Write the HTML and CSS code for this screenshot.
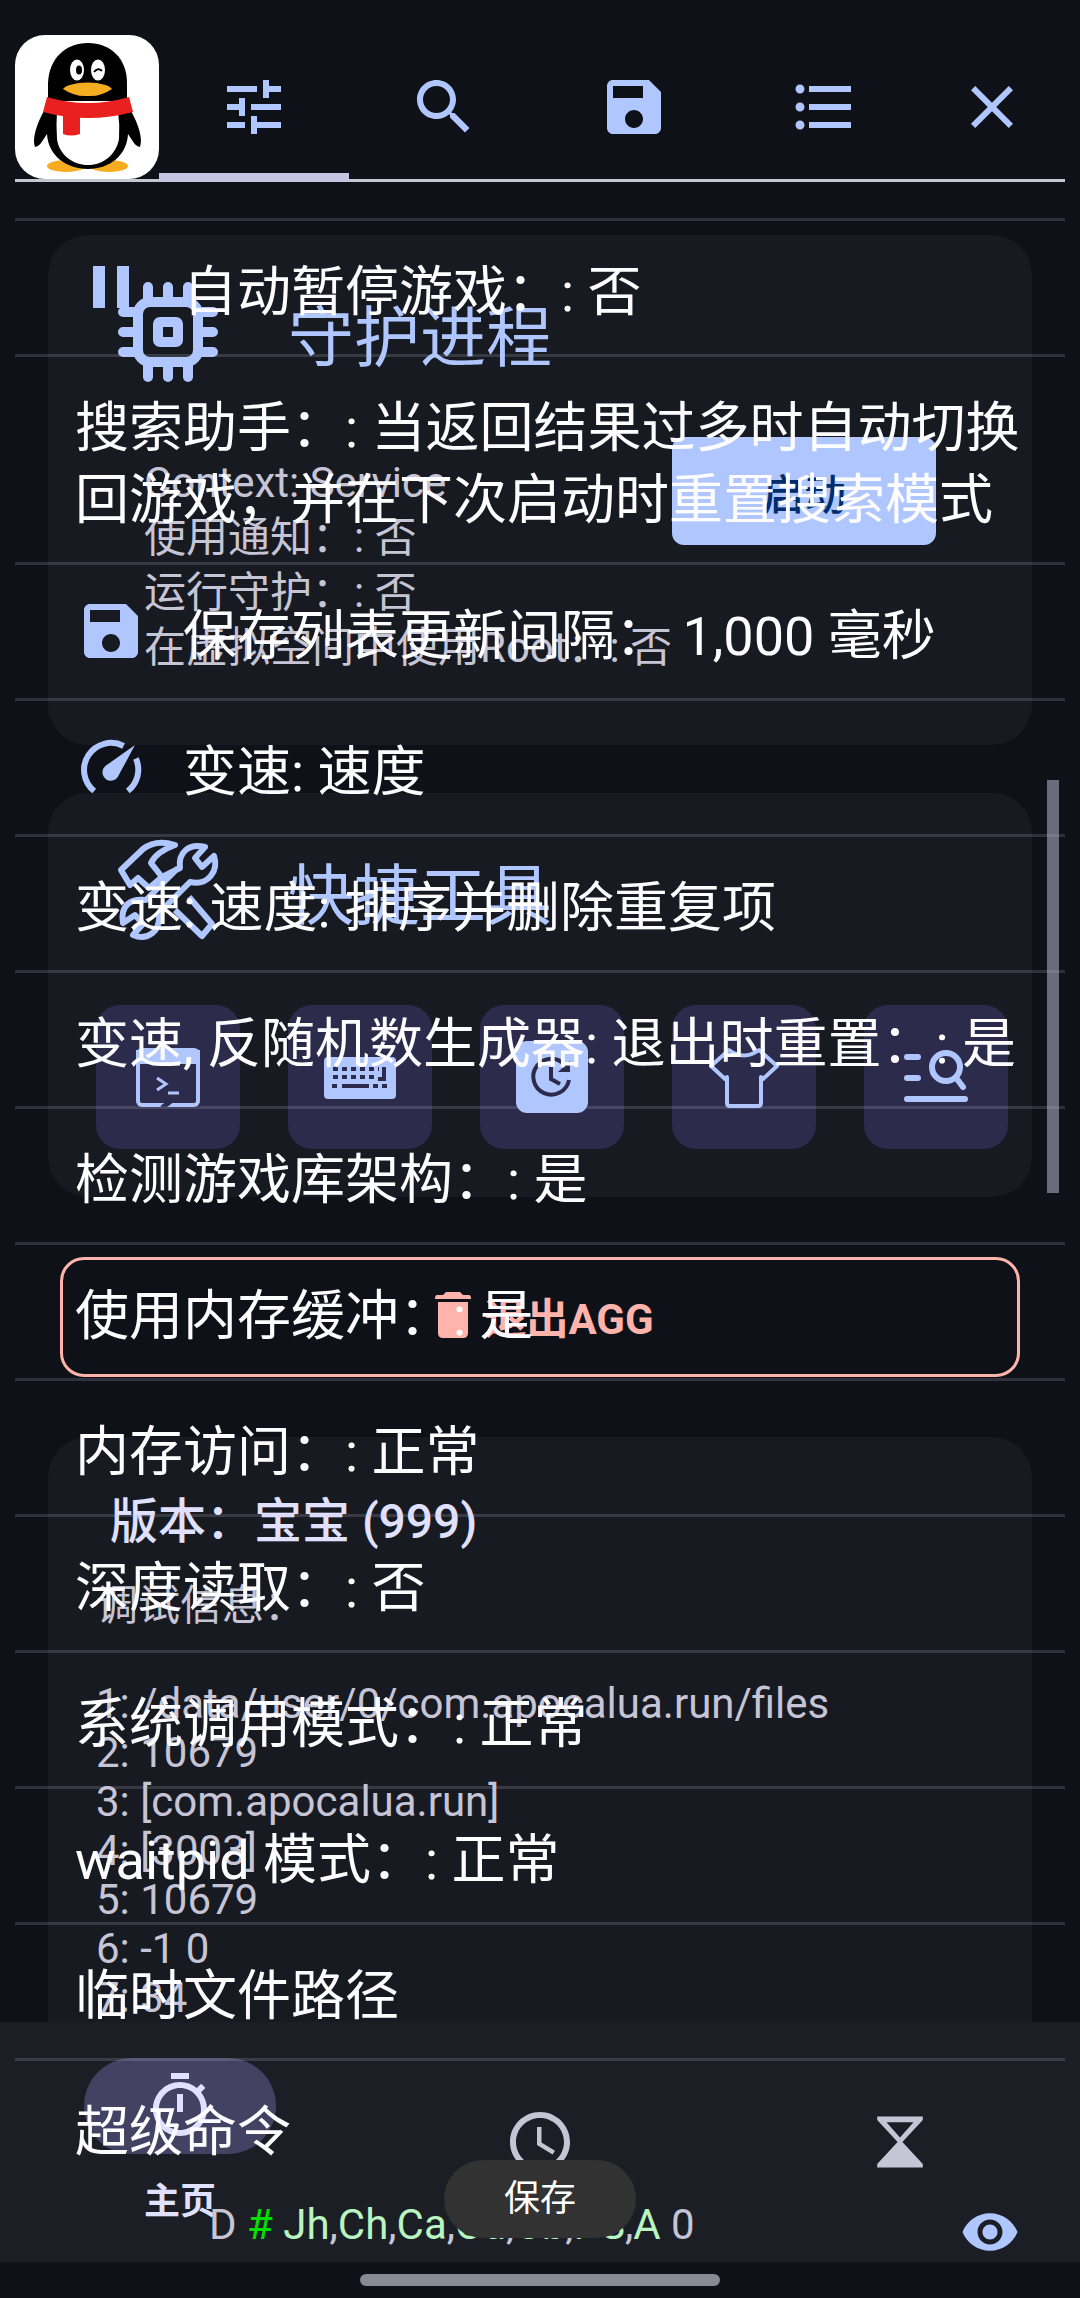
FILE: index.html
```html
<!DOCTYPE html>
<html lang="zh-CN">
<head>
    <meta charset="UTF-8">
    <meta name="viewport" content="width=device-width, initial-scale=1">
    <title>AGG</title>
    <link rel="stylesheet" href="styles.css">
</head>
<body>
<div class="screen">

    <!-- app -->
    <div class="app">
        <main class="content">
            <section class="card">
                <div class="card-head">
                    <svg class="card-icon" viewBox="0 0 120 120" fill="none" stroke="currentColor" stroke-width="10" stroke-linecap="round">
                        <rect x="30" y="30" width="60" height="60" rx="12"/>
                        <rect x="50" y="50" width="20" height="20" rx="2"/>
                        <path d="M40 15v12M60 15v12M80 15v12M40 93v12M60 93v12M80 93v12M15 40h12M15 60h12M15 80h12M93 40h12M93 60h12M93 80h12"/>
                    </svg>
                    <h2>守护进程</h2>
                </div>
                <div class="service">
                    <p>Context: Service<br>使用通知：: 否<br>运行守护：: 否<br>在虚拟空间中使用Root：: 否</p>
                    <button class="start">启动</button>
                </div>
            </section>

            <section class="card tools-card">
                <div class="card-head">
                    <svg class="card-icon" viewBox="-10 -10 120 120" fill="none" stroke="currentColor" stroke-width="6" stroke-linejoin="round">
                        <path d="M3 30L25 9Q38-1 57 5Q38 12 33 23L44 37L31 48L20 38L12 45Z"/>
                        <path d="M46 36L62 28C60 13 70 3 87 7L77 18L84 27L96 16C101 31 90 46 72 42L41 73C43 92 29 101 15 95L25 84L17 75L5 83C2 65 13 58 28 60L60 28"/>
                        <path d="M71 57L94 84L84 96L57 70"/>
                    </svg>
                    <h2>快捷工具</h2>
                </div>
                <div class="tools">
                    <button class="tool" aria-label="终端">
                        <svg viewBox="0 0 72 72" fill="none" stroke="currentColor" stroke-width="4">
                            <rect x="6" y="9" width="60" height="55" rx="4"/>
                            <path d="M6 11h60v10H6z" fill="currentColor"/>
                            <path d="M25 37l9 6-9 6M36 52h11" stroke-width="3"/>
                            <path d="M30 67l10-8" stroke="#2d2b4b" stroke-width="5"/>
                        </svg>
                    </button>
                    <button class="tool" aria-label="键盘">
                        <svg viewBox="0 0 72 72">
                            <rect y="16" width="72" height="42" rx="4" fill="currentColor"/>
                            <path d="M9 28h46M9 36h43M8 45h6M49 45h5M58 45h5" fill="none" stroke="#2d2b4b" stroke-width="4" stroke-dasharray="5 4"/>
                            <path d="M18 45h27M60 26v12h-6" fill="none" stroke="#2d2b4b" stroke-width="4"/>
                        </svg>
                    </button>
                    <button class="tool" aria-label="定时">
                        <svg viewBox="0 0 72 72" fill="none" stroke="#2d2b4b" stroke-width="4">
                            <rect width="72" height="72" rx="11" fill="currentColor" stroke="none"/>
                            <path d="M49 24A18 18 0 1 0 53 39M35 26v12l9 5"/>
                            <path d="M54 20v11H42z" fill="#2d2b4b" stroke="none"/>
                        </svg>
                    </button>
                    <button class="tool" aria-label="主题">
                        <svg viewBox="0 0 72 72" fill="none" stroke="currentColor" stroke-width="4" stroke-linejoin="round">
                            <path d="M21 9Q36 20 51 9L69 25L55 38L53 36V62Q53 65 50 65H22Q19 65 19 62V36L17 38L3 25Z"/>
                        </svg>
                    </button>
                    <button class="tool" aria-label="查找">
                        <svg viewBox="0 0 72 72" fill="none" stroke="currentColor" stroke-width="6" stroke-linecap="round">
                            <path d="M7 16h11M7 37h11M7 58h58M57 38l6 8"/>
                            <circle cx="46" cy="26" r="14"/>
                        </svg>
                    </button>
                </div>
            </section>

            <button class="exit">
                <svg viewBox="0 0 54 54" fill="currentColor">
                    <path d="M20 4h14l3 3h6q2 0 2 4H9q0-4 2-4h6zM12 14h30v31q0 5-5 5H17q-5 0-5-5z"/>
                </svg>
                退出AGG
            </button>

            <section class="card debug-card">
                <h3>版本：宝宝 (999)</h3>
                <pre class="debug">调试信息：

1: /data/user/0/com.apocalua.run/files
2: 10679
3: [com.apocalua.run]
4: [3003]
5: 10679
6: -1 0
7: 34</pre>
            </section>
        </main>

        <nav class="nav">
            <a class="nav-item active" href="#home">
                <span class="pill">
                    <svg class="icon" viewBox="0 0 24 24"><path d="M15 1H9v2h6V1zm-4 13h2V8h-2v6zm8.03-6.61l1.42-1.42c-.43-.51-.9-.99-1.41-1.41l-1.42 1.42C16.07 4.74 14.12 4 12 4c-4.97 0-9 4.03-9 9s4.02 9 9 9 9-4.03 9-9c0-2.12-.74-4.07-1.97-5.61zM12 20c-3.87 0-7-3.13-7-7s3.13-7 7-7 7 3.13 7 7-3.13 7-7 7z"/></svg>
                </span>
                <span>主页</span>
            </a>
            <a class="nav-item" href="#recent" aria-label="最近">
                <svg class="icon" viewBox="0 0 24 24"><path d="M12 2C6.500 2 2 6.500 2 12s4.500 10 10 10 10-4.500 10-10S17.500 2 12 2zm0 18c-4.400 0-8-3.600-8-8s3.600-8 8-8 8 3.600 8 8-3.600 8-8 8zM12.500 7H11v6l5.200 3.200.8-1.300-4.500-2.700z"/></svg>
            </a>
            <a class="nav-item" href="#wait" aria-label="等待">
                <svg class="icon" viewBox="0 0 24 24"><path fill-rule="evenodd" d="M4.400 3.500h15.200v1.200L12.800 12l6.800 7.300v1.200H4.400v-1.200L11.200 12 4.400 4.700zM7.500 5.400L12 10.500l4.500-5.100z"/></svg>
            </a>
        </nav>
        <div class="gesture"><span></span></div>
    </div>

    <!-- floating panel -->
    <div class="panel">
        <header class="tabs">
            <svg class="logo" viewBox="0 0 144 144">
                <rect width="144" height="144" rx="30" fill="#fff"/>
                <ellipse cx="51" cy="131" rx="19" ry="6" fill="#f5ac20"/>
                <ellipse cx="94" cy="131" rx="19" ry="6" fill="#f5ac20"/>
                <path d="M30 74C21 90 17 104 20 112C25 112 29 103 32 99C33 120 51 134 73 134S112 120 113 99C116 103 120 112 125 112C128 104 124 90 115 74Z"/>
                <path d="M33 66V48C34 23 51 8 73 8S112 23 112 48V66Z"/>
                <path d="M42 76H103Q105 90 104 104C101 120 88 130 73 130S44 120 42 104Q41 90 42 76Z" fill="#fff"/>
                <path d="M32 62Q73 74 114 62L118 77Q73 89 28 77Z" fill="#e8201f"/>
                <path d="M48 80h17v19q-9 3-17 0z" fill="#e8201f"/>
                <path d="M48 54Q53 48 73 47.500Q92 48 97 54Q85 62 73 61Q60 62 48 54Z" fill="#f5ac20"/>
                <ellipse cx="62" cy="35" rx="7" ry="10.500" fill="#fff"/>
                <ellipse cx="83" cy="35" rx="7" ry="10.500" fill="#fff"/>
                <ellipse cx="64" cy="35" rx="3" ry="4.500"/>
                <path d="M79 37q4-5 8-1" fill="none" stroke="#000" stroke-width="2"/>
            </svg>
            <button class="tab current" aria-label="设置">
                <svg class="icon" viewBox="0 0 24 24"><path d="M3 17v2h6v-2H3zM3 5v2h10V5H3zm10 16v-2h8v-2h-8v-2h-2v6h2zM7 9v2H3v2h4v2h2V9H7zm14 4v-2H11v2h10zm-6-4h2V7h4V5h-4V3h-2v6z"/></svg>
            </button>
            <button class="tab" aria-label="搜索">
                <svg class="icon" viewBox="0 0 24 24"><path d="M15.500 14h-.79l-.28-.27C15.410 12.590 16 11.110 16 9.500 16 5.910 13.090 3 9.500 3S3 5.910 3 9.500 5.910 16 9.500 16c1.610 0 3.090-.59 4.230-1.570l.27.28v.79l5 4.990L20.490 19l-4.990-5zm-6 0C7.010 14 5 11.990 5 9.500S7.010 5 9.500 5 14 7.010 14 9.500 11.990 14 9.500 14z"/></svg>
            </button>
            <button class="tab" aria-label="保存列表">
                <svg class="icon" viewBox="0 0 24 24"><path d="M17 3H5c-1.110 0-2 .9-2 2v14c0 1.100.89 2 2 2h14c1.100 0 2-.9 2-2V7l-4-4zm-5 16c-1.660 0-3-1.340-3-3s1.340-3 3-3 3 1.340 3 3-1.340 3-3 3zm3-10H5V5h10v4z"/></svg>
            </button>
            <button class="tab" aria-label="内存列表">
                <svg class="icon" viewBox="0 0 24 24"><path d="M4 10.500c-.83 0-1.500.67-1.500 1.500s.67 1.500 1.500 1.500 1.500-.67 1.500-1.500-.67-1.500-1.500-1.500zm0-6c-.83 0-1.500.67-1.500 1.500S3.170 7.500 4 7.500 5.500 6.830 5.500 6 4.830 4.500 4 4.500zm0 12c-.83 0-1.500.68-1.500 1.500s.68 1.500 1.500 1.500 1.500-.68 1.500-1.500-.67-1.500-1.500-1.500zM7 19h14v-2H7v2zm0-6h14v-2H7v2zm0-8v2h14V5H7z"/></svg>
            </button>
            <button class="tab close" aria-label="关闭">
                <svg class="icon" viewBox="0 0 24 24"><path d="M19 6.410L17.590 5 12 10.590 6.410 5 5 6.410 10.590 12 5 17.590 6.410 19 12 13.410 17.590 19 19 17.590 13.410 12z"/></svg>
            </button>
        </header>

        <ul class="options">
            <li>
                <svg class="icon" viewBox="0 0 24 24"><path d="M6 19h4V5H6v14zm8-14v14h4V5h-4z"/></svg>
                自动暂停游戏：: 否
            </li>
            <li>搜索助手：: 当返回结果过多时自动切换回游戏，并在下次启动时重置搜索模式</li>
            <li>
                <svg class="icon" viewBox="0 0 24 24"><path d="M17 3H5c-1.110 0-2 .9-2 2v14c0 1.100.89 2 2 2h14c1.100 0 2-.9 2-2V7l-4-4zm-5 16c-1.660 0-3-1.340-3-3s1.340-3 3-3 3 1.340 3 3-1.340 3-3 3zm3-10H5V5h10v4z"/></svg>
                保存列表更新间隔： 1,000 毫秒
            </li>
            <li>
                <svg class="icon" viewBox="0 0 24 24">
                    <path d="M6.400 20A9 9 0 0 1 16.200 5M20.300 9.200A9 9 0 0 1 17.600 20" fill="none" stroke="currentColor" stroke-width="2"/>
                    <path d="M20 4.700L14.600 14.700A2.800 2.800 0 1 1 10.200 11.600Z"/>
                </svg>
                变速: 速度
            </li>
            <li>变速: 速度: 排序并删除重复项</li>
            <li>变速, 反随机数生成器: 退出时重置：: 是</li>
            <li>检测游戏库架构：: 是</li>
            <li>使用内存缓冲：: 是</li>
            <li>内存访问：: 正常</li>
            <li>深度读取：: 否</li>
            <li>系统调用模式：: 正常</li>
            <li>waitpid 模式：: 正常</li>
            <li>临时文件路径</li>
            <li>超级命令</li>
        </ul>

        <footer class="status">
            <p>D <b class="hash">#</b> <i>Jh</i>,<i>Ch</i>,<i>Ca</i>,<i>Cd</i>,<i>Cb</i>,<i>PS</i>,<i>A</i> 0</p>
            <button class="eye" aria-label="显示">
                <svg viewBox="0 0 24 24"><path d="M12 4.500C7 4.500 2.730 7.610 1 12c1.730 4.390 6 7.500 11 7.500s9.270-3.110 11-7.500c-1.730-4.390-6-7.500-11-7.500zM12 17c-2.760 0-5-2.240-5-5s2.240-5 5-5 5 2.240 5 5-2.240 5-5 5zm0-8c-1.660 0-3 1.340-3 3s1.340 3 3 3 3-1.340 3-3-1.340-3-3-3z"/></svg>
            </button>
        </footer>
        <div class="scrollbar"></div>
        <div class="toast">保存</div>
    </div>

</div>
</body>
</html>
```
FILE: styles.css
```css
* {
    box-sizing: border-box;
}

body {
    margin: 0;
    background-color: #0f1118;
    color: #c6c5d6;
    font-family: Roboto, "Noto Sans CJK SC", sans-serif;
    font-size: 42px;
}

h2, h3, p, ul, pre {
    margin: 0;
    padding: 0;
    font-weight: normal;
}

button {
    border: none;
    padding: 0;
    background: none;
    color: inherit;
    font: inherit;
    cursor: pointer;
}

svg {
    display: block;
    flex-shrink: 0;
}

.icon {
    width: 72px;
    height: 72px;
    fill: currentColor;
}

/* the panel is stacked over the app in the same grid cell */
.screen {
    display: grid;
    min-height: 100vh;
}

.app,
.panel {
    grid-area: 1 / 1;
    display: flex;
    flex-direction: column;
    min-width: 0;
}

.content {
    flex: 1;
    display: flex;
    flex-direction: column;
    padding: 235px 48px 0;
}

.card {
    background-color: #181a22;
    border-radius: 40px;
    padding: 37px 24px 48px 48px;
}

.tools-card {
    margin-top: 48px;
}

.card-head {
    display: flex;
    align-items: center;
    gap: 60px;
    padding-left: 12px;
    color: #afc6ff;
}

.card-icon {
    width: 120px;
    height: 120px;
}

.card h2 {
    padding-top: 14px;
    font-size: 66px;
    line-height: 80px;
}

.service {
    display: flex;
    align-items: flex-start;
    padding: 45px 72px 22px 48px;
}

.service p {
    flex: 1;
    padding-top: 18px;
    line-height: 55px;
    white-space: nowrap;
}

.start {
    width: 264px;
    height: 108px;
    border-radius: 12px;
    background-color: #afc6ff;
    color: #002d6c;
    font-weight: 500;
}

.tools {
    display: flex;
    gap: 48px;
    margin-top: 55px;
}

.tool {
    flex: 1;
    display: flex;
    align-items: center;
    justify-content: center;
    height: 144px;
    border-radius: 24px;
    background-color: #2d2b4b;
    color: #afc6ff;
}

.tool svg {
    width: 72px;
    height: 72px;
}

.exit {
    display: flex;
    align-items: center;
    justify-content: center;
    gap: 4px;
    height: 120px;
    margin: 60px 12px;
    padding-bottom: 4px;
    border: 3px solid #ffb4ab;
    border-radius: 24px;
    color: #ffb4ab;
    font-weight: bold;
}

.exit svg {
    width: 54px;
    height: 54px;
}

.debug-card {
    flex: 1;
    padding-bottom: 0;
    border-radius: 40px 40px 0 0;
}

.debug-card h3 {
    padding: 18px 14px 0;
    color: #e0e0ff;
    font-size: 48px;
    font-weight: 500;
    line-height: 60px;
}

.debug {
    margin-top: 29px;
    font-family: inherit;
    line-height: 49px;
}

.nav {
    display: grid;
    grid-template-columns: repeat(3, 1fr);
    height: 240px;
    background-color: #1c1e26;
}

.nav-item {
    display: flex;
    flex-direction: column;
    align-items: center;
    justify-content: center;
    gap: 24px;
    color: #c6c5d6;
    font-size: 36px;
    font-weight: bold;
    line-height: 48px;
    text-decoration: none;
}

.nav-item.active {
    color: #e0e0ff;
}

.pill {
    display: flex;
    justify-content: center;
    width: 192px;
    padding: 12px;
    border-radius: 48px;
    background-color: #444263;
}

.gesture {
    display: flex;
    justify-content: center;
    align-items: center;
    height: 36px;
    padding-bottom: 6px;
}

.gesture span {
    width: 360px;
    height: 12px;
    margin-top: 6px;
    border-radius: 6px;
    background-color: #878a92;
}

/* floating panel */
.panel {
    position: relative;
    padding: 35px 15px 0;
}

.tabs {
    display: flex;
    height: 147px;
    border-bottom: 3px solid #c6c5d0;
    color: #afc6ff;
}

.logo {
    width: 144px;
    height: 144px;
}

.tab {
    flex: 1;
    display: flex;
    align-items: center;
    justify-content: center;
}

.tab.current {
    height: 147px;
    padding-top: 6px;
    border-bottom: 9px solid #c6c4e0;
}

.close {
    flex: 0 0 146px;
}

.options {
    margin-top: 36px;
    list-style: none;
    color: #fdfdff;
    font-size: 54px;
    line-height: 72px;
}

.options li {
    display: flex;
    align-items: center;
    gap: 36px;
    padding: 36px 40px 25px 60px;
    border-top: 3px solid rgba(200, 200, 220, 0.18);
}

.options .icon {
    margin: -6px 0 6px;
    color: #afc6ff;
}

.status {
    display: flex;
    align-items: center;
    justify-content: space-between;
    padding: 0 45px 0 194px;
}

.status p {
    padding-bottom: 8px;
}

.status i {
    color: #b8f5c0;
    font-style: normal;
}

.status .hash {
    color: #00e000;
    font-weight: normal;
}

.eye svg {
    width: 60px;
    height: 60px;
    margin-top: 8px;
    fill: #afc6ff;
}

.scrollbar {
    position: absolute;
    top: 780px;
    right: 21px;
    width: 12px;
    height: 413px;
    background-color: rgba(170, 168, 195, 0.6);
}

.toast {
    position: absolute;
    bottom: 60px;
    left: 50%;
    width: 192px;
    margin-left: -96px;
    border-radius: 39px;
    background-color: #323232;
    color: #fff;
    font-size: 36px;
    line-height: 78px;
    text-align: center;
}
```
